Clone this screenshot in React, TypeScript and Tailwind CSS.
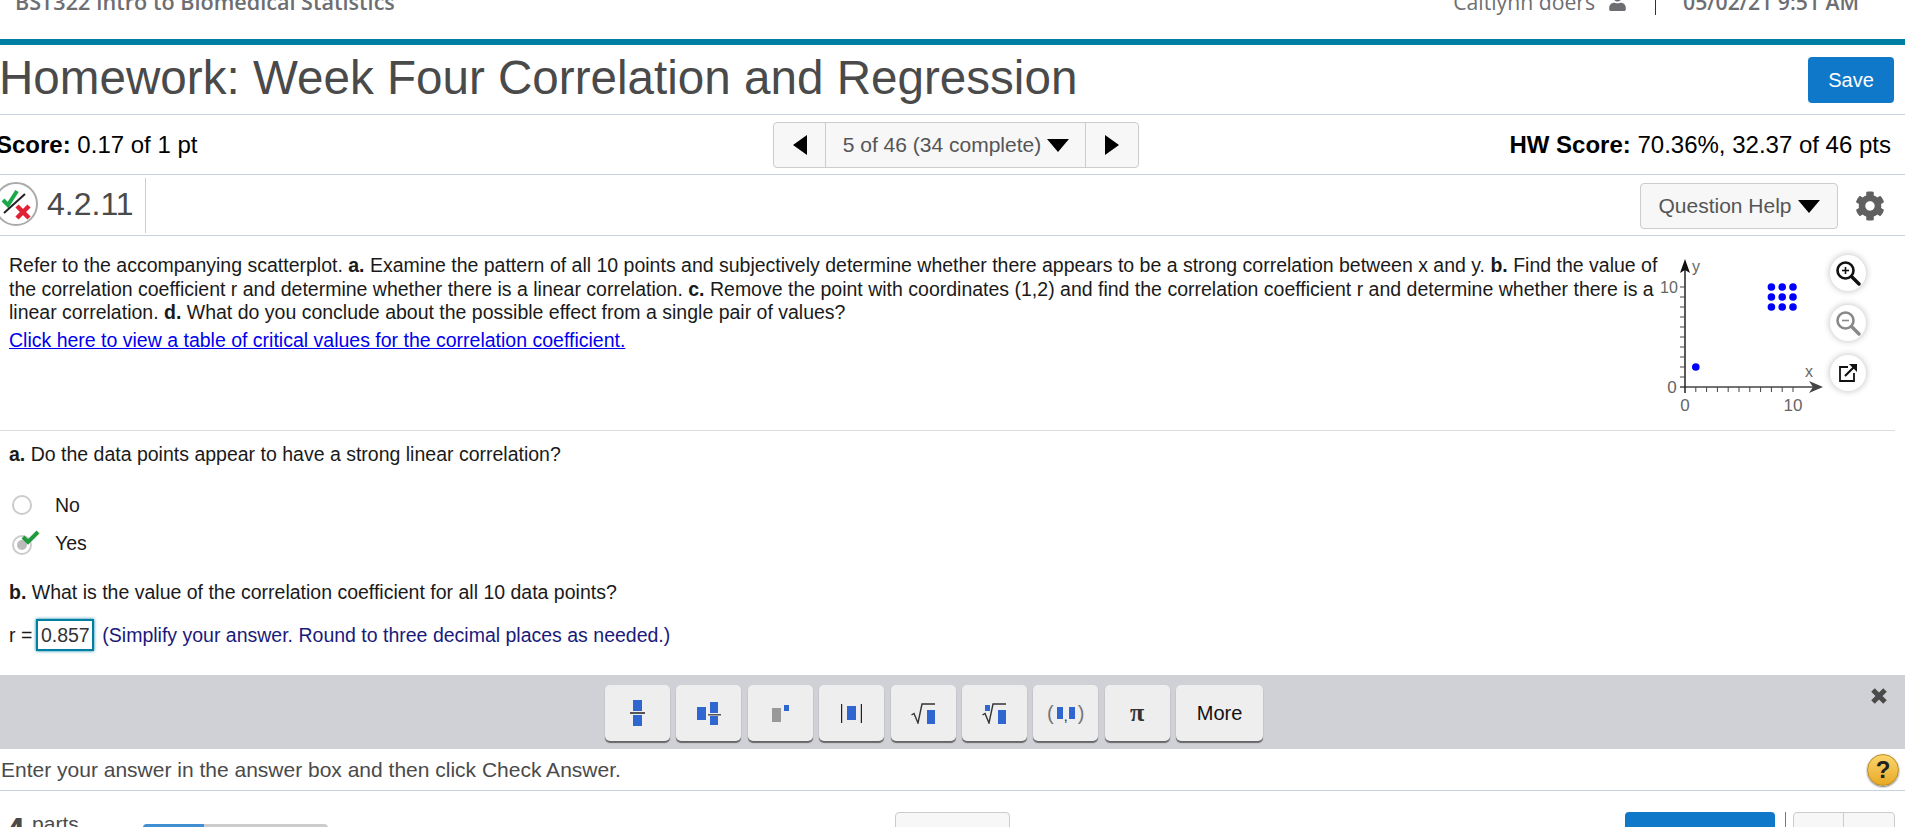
import React from "react";
import { FaCog, FaUser } from "react-icons/fa";

const Box = ({ x, y, w, h, fill = "#2f66d0" }: any) => <rect x={x} y={y} width={w} height={h} fill={fill} />;

function Frac() {
  return (
    <svg width="15" height="26" viewBox="0 0 15 26">
      <Box x={3} y={0} w={9} h={11} />
      <rect x="0" y="12" width="15" height="2" fill="#555" />
      <Box x={3} y={15} w={9} h={11} />
    </svg>
  );
}

function Mixed() {
  return (
    <svg width="24" height="23" viewBox="0 0 24 23">
      <Box x={0} y={5} w={9} h={13} />
      <Box x={13} y={0} w={8} h={11} />
      <rect x="11" y="12" width="13" height="1.5" fill="#555" />
      <Box x={13} y={14} w={8} h={9} />
    </svg>
  );
}

function Power() {
  return (
    <svg width="17" height="17" viewBox="0 0 17 17">
      <Box x={0} y={3} w={9} h={14} fill="#999999" />
      <Box x={12} y={0} w={5} h={6} />
    </svg>
  );
}

function Abs() {
  return (
    <svg width="21" height="19" viewBox="0 0 21 19">
      <rect x="0" y="0" width="1.2" height="19" fill="#222" />
      <Box x={6} y={2} w={9} h={14} />
      <rect x="19.8" y="0" width="1.2" height="19" fill="#222" />
    </svg>
  );
}

function Sqrt({ index }: { index?: boolean }) {
  return (
    <svg width="24" height="21" viewBox="0 0 24 21">
      {index && <Box x={3} y={2} w={5} h={6} />}
      <path d="M0.5 12 L3 10.5 L7 20 L11 1 L24 1" fill="none" stroke="#333" strokeWidth="1.4" />
      <Box x={16} y={7} w={8} h={14} />
    </svg>
  );
}

function Pair() {
  return (
    <div className="flex items-center text-[20px] leading-none text-[#777]">
      <span>(</span>
      <span className="w-[6px] h-[12px] bg-[#2f66d0] ml-[3px]" />
      <span className="w-[6px] text-center text-[14px] text-[#222] self-end">,</span>
      <span className="w-[6px] h-[12px] bg-[#2f66d0]" />
      <span className="ml-[3px]">)</span>
    </div>
  );
}

function ToolButton({ children, wide }: { children: React.ReactNode; wide?: boolean }) {
  return (
    <button className={`${wide ? "w-[87px]" : "w-[65px]"} h-[56px] flex items-center justify-center bg-[#eeeeee] rounded-[5px] shadow-[0_2px_1px_#666]`}>
      {children}
    </button>
  );
}

function Scatter() {
  const grid: number[][] = [];
  [8, 9, 10].forEach((a) => [8, 9, 10].forEach((b) => grid.push([a, b])));
  const px = (v: number) => 60 + v * 10.8;
  const py = (v: number) => 137 - v * 10;
  const ticks = [1, 2, 3, 4, 5, 6, 7, 8, 9, 10];
  return (
    <svg width="200" height="165" viewBox="0 0 200 165" className="shrink-0">
      <line x1="55" y1="137" x2="190" y2="137" stroke="#444" strokeWidth="1.5" />
      <polygon points="198,137 184,131 188,137 184,143" fill="#444" />
      <line x1="60" y1="143" x2="60" y2="20" stroke="#222" strokeWidth="1.5" />
      <polygon points="60,9 55,23 60,20 65,23" fill="#111" />
      {ticks.map((v) => (
        <line key={"x" + v} x1={px(v)} y1="137" x2={px(v)} y2="142" stroke="#444" strokeWidth="1" />
      ))}
      {ticks.map((v) => (
        <line key={"y" + v} x1="55" y1={py(v)} x2="60" y2={py(v)} stroke="#444" strokeWidth="1" />
      ))}
      {grid.map(([a, b]) => (
        <circle key={a + "-" + b} cx={px(a)} cy={py(b)} r="3.8" fill="#0000ff" />
      ))}
      <circle cx={px(1)} cy={py(2)} r="3.8" fill="#0000ff" />
      <g fontFamily="Liberation Sans, sans-serif" fontSize="16" fill="#666">
        <text x="67" y="22">y</text>
        <text x="180" y="127">x</text>
        <text x="35" y="43">10</text>
        <text x="47" y="143" textAnchor="middle" fontSize="17">0</text>
        <text x="60" y="161" textAnchor="middle" fontSize="17">0</text>
        <text x="168" y="161" textAnchor="middle" fontSize="17">10</text>
      </g>
    </svg>
  );
}

function Magnifier({ plus, color }: { plus?: boolean; color: string }) {
  return (
    <svg width="26" height="26" viewBox="0 0 26 26" fill="none" stroke={color}>
      <circle cx="10.5" cy="10.5" r="8" strokeWidth="2.6" />
      <line x1="16.5" y1="16.5" x2="24" y2="24" strokeWidth="3.4" strokeLinecap="round" />
      <line x1="7" y1="10.5" x2="14" y2="10.5" strokeWidth="1.6" />
      {plus && <line x1="10.5" y1="7" x2="10.5" y2="14" strokeWidth="1.6" />}
    </svg>
  );
}

function OpenNew() {
  return (
    <svg width="20" height="20" viewBox="0 0 20 20" fill="none" stroke="#111">
      <path d="M10 4 H2 V18 H16 V10" strokeWidth="1.8" />
      <path d="M7 13 L17 3" strokeWidth="2.2" />
      <polygon points="11,1 19,1 19,9" fill="#111" stroke="none" />
    </svg>
  );
}

function RoundButton({ children }: { children: React.ReactNode }) {
  return (
    <button className="w-[36px] h-[36px] rounded-full bg-white flex items-center justify-center shadow-[0_0_7px_#bbb]">
      {children}
    </button>
  );
}

export default function App() {
  return (
    <div className="h-[827px] w-[1905px] overflow-hidden bg-white font-['Liberation_Sans',Arial,sans-serif] text-black">
      {/* top bar, cut off by the screenshot */}
      <div className="h-[39px] flex justify-between text-[#6d6e71] font-['Open_Sans',sans-serif] text-[21.6px] leading-[20px] overflow-hidden">
        <div className="pl-[15px] -mt-[8px] font-semibold">BST322 Intro to Biomedical Statistics</div>
        <div className="flex items-start pr-[46px] -mt-[8px] text-[21.2px]">
          <span className="font-normal">Caitlynn doers</span>
          <FaUser className="ml-[13px] text-[19px]" />
          <span className="w-[1px] h-[23px] bg-[#333] ml-[28px] mr-[27px]" />
          <span className="font-semibold">05/02/21 9:51 AM</span>
        </div>
      </div>
      <div className="h-[6px] bg-[#007fa3]" />

      {/* title */}
      <div className="h-[70px] flex items-center justify-between border-b border-[#c9d1e0] pr-[11px]">
        <h1 className="text-[47.6px] leading-none text-[#4a4a4a] -ml-[1px] -mt-[4px]">Homework: Week Four Correlation and Regression</h1>
        <button className="w-[86px] h-[46px] rounded-[4px] bg-[#0f78c9] text-white text-[20px]">Save</button>
      </div>

      {/* score row */}
      <div className="h-[60px] grid grid-cols-3 items-center border-b border-[#c9d1e0] text-[24px] pr-[14px]">
        <div className="-ml-[4px]"><b>Score:</b> 0.17 of 1 pt</div>
        <div className="flex justify-center">
          <div className="ml-[22px] flex h-[46px] w-[366px] shrink-0 rounded-[4px] border border-[#ccc] bg-[#f7f7f7] text-[#555] text-[21px]">
            <div className="w-[51px] flex items-center justify-center text-black">
              <span className="border-y-[10px] border-y-transparent border-r-[14px] border-r-black" />
            </div>
            <div className="flex-1 flex items-center justify-center border-x border-[#ccc] whitespace-nowrap">
              5 of 46 (34 complete)
              <span className="ml-[6px] mt-[2px] border-x-[11px] border-x-transparent border-t-[13px] border-t-black" />
            </div>
            <div className="w-[52px] flex items-center justify-center">
              <span className="border-y-[10px] border-y-transparent border-l-[14px] border-l-black" />
            </div>
          </div>
        </div>
        <div className="text-right"><b>HW Score:</b> 70.36%, 32.37 of 46 pts</div>
      </div>

      {/* question number */}
      <div className="h-[61px] flex items-center justify-between border-b border-[#c9d1e0] pr-[20px]">
        <div className="flex items-center h-full">
          <svg width="44" height="44" viewBox="0 0 44 44" className="-ml-[6px] -mt-[2px] shrink-0">
            <circle cx="22" cy="22" r="21" fill="white" stroke="#aaaaaa" strokeWidth="2" />
            <path d="M9 18 L14 23 L23 9" fill="none" stroke="#1ba84a" strokeWidth="4" />
            <line x1="10" y1="31" x2="31" y2="12" stroke="#222" strokeWidth="2" />
            <path d="M23 24 L35 36 M35 24 L23 36" stroke="#e02035" strokeWidth="4.5" />
          </svg>
          <span className="ml-[9px] -mt-[2px] text-[32px] text-[#4a4a4a]">4.2.11</span>
          <span className="ml-[11px] w-[1px] h-[55px] bg-[#ccc]" />
        </div>
        <div className="flex items-center mt-[1px]">
          <button className="w-[198px] h-[46px] flex items-center justify-center rounded-[4px] border border-[#ccc] bg-[#f7f7f7] text-[21px] text-[#555]">
            Question Help
            <span className="ml-[6px] mt-[2px] border-x-[11px] border-x-transparent border-t-[13px] border-t-black" />
          </button>
          <FaCog className="ml-[17px] text-[30px] text-[#606060]" />
        </div>
      </div>

      {/* question text with the plot */}
      <div className="h-[195px] flex border-b border-[#ddd] mr-[10px]">
        <div className="w-[1640px] shrink-0 pl-[9px] pt-[18px] text-[19.5px] leading-[23.7px] text-[#1a1a1a]">
          <div className="w-[1660px]">
            Refer to the accompanying scatterplot. <b>a.</b> Examine the pattern of all 10 points and subjectively determine whether there appears to be a strong correlation between x and y. <b>b.</b> Find the value of<br />
            the correlation coefficient r and determine whether there is a linear correlation. <b>c.</b> Remove the point with coordinates (1,2) and find the correlation coefficient r and determine whether there is a<br />
            linear correlation. <b>d.</b> What do you conclude about the possible effect from a single pair of values?
          </div>
          <a className="block mt-[4px] text-[#0000ee] underline">Click here to view a table of critical values for the correlation coefficient.</a>
        </div>
        <div className="mt-[14px] -ml-[15px]"><Scatter /></div>
        <div className="ml-[5px] mt-[19px] flex flex-col gap-[14px]">
          <RoundButton><Magnifier plus color="#111" /></RoundButton>
          <RoundButton><Magnifier color="#888" /></RoundButton>
          <RoundButton><OpenNew /></RoundButton>
        </div>
      </div>

      {/* answers */}
      <div className="pl-[9px] text-[19.5px] leading-[22px] text-[#1a1a1a]">
        <div className="pt-[12px]"><b>a.</b> Do the data points appear to have a strong linear correlation?</div>
        <div className="mt-[29px] flex items-center h-[22px] pl-[3px]">
          <span className="w-[20px] h-[20px] rounded-full bg-white border-2 border-[#ccc]" />
          <span className="ml-[23px]">No</span>
        </div>
        <div className="mt-[16px] flex items-center h-[22px] pl-[3px]">
          <svg width="28" height="26" viewBox="0 0 28 26" className="shrink-0">
            <circle cx="10" cy="15" r="9" fill="white" stroke="#ccc" strokeWidth="2" />
            <circle cx="10" cy="15" r="5" fill="#bbb" />
            <path d="M11 7 L16 12 L26 2" fill="none" stroke="#1f9a3c" strokeWidth="4" />
          </svg>
          <span className="ml-[15px]">Yes</span>
        </div>
        <div className="mt-[27px]"><b>b.</b> What is the value of the correlation coefficient for all 10 data points?</div>
        <div className="mt-[16px] flex items-center h-[32px]">
          <span>r =</span>
          <span className="ml-[4px] w-[58px] h-[32px] flex items-center justify-center border-2 border-[#007fa3] shadow-[0_0_3px_#007fa3] text-[#333]">0.857</span>
          <span className="ml-[8px] text-[#1a1a7a]">(Simplify your answer. Round to three decimal places as needed.)</span>
        </div>
      </div>

      {/* math palette */}
      <div className="mt-[24px] h-[74px] flex justify-center items-start pt-[10px] bg-[#d0d1d6] relative">
        <div className="flex gap-[6.4px] mr-[37px]">
          <ToolButton><Frac /></ToolButton>
          <ToolButton><Mixed /></ToolButton>
          <ToolButton><Power /></ToolButton>
          <ToolButton><Abs /></ToolButton>
          <ToolButton><Sqrt /></ToolButton>
          <ToolButton><Sqrt index /></ToolButton>
          <ToolButton><Pair /></ToolButton>
          <ToolButton><span className="text-[26px] leading-none font-bold text-[#333] font-['Liberation_Serif',serif]">π</span></ToolButton>
          <ToolButton wide><span className="text-[20px] text-[#111]">More</span></ToolButton>
        </div>
        <svg width="18" height="18" viewBox="0 0 18 18" className="absolute right-[17px] top-[12px]">
          <path d="M3 3 L15 15 M15 3 L3 15" stroke="#4a4a4a" strokeWidth="5" />
        </svg>
      </div>

      {/* instructions */}
      <div className="h-[42px] flex items-center justify-between border-b border-[#c9d1e0] pr-[6px] text-[21px] text-[#4a4a4a]">
        <span className="pl-[1px]">Enter your answer in the answer box and then click Check Answer.</span>
        <span className="w-[32px] h-[32px] rounded-full bg-linear-to-b from-[#fbd56a] to-[#e8a91f] border border-[#b98a1e] flex items-center justify-center font-bold text-[24px] text-[#222] shadow-[0_1px_2px_#777]">?</span>
      </div>

      {/* bottom row, cut off */}
      <div className="flex items-start">
        <div className="flex items-start w-[143px] shrink-0">
          <span className="ml-[5px] mt-[23px] text-[36px] leading-none font-bold text-[#4a4a4a]">4</span>
          <span className="ml-[7px] mt-[22px] text-[21px] leading-none text-[#4a4a4a]">parts</span>
        </div>
        <div className="mt-[33px] w-[185px] h-[20px] rounded-[4px] bg-[#ccc] overflow-hidden">
          <div className="w-[61px] h-full bg-[#3f8fd2]" />
        </div>
        <div className="ml-[567px] mt-[21px] w-[115px] h-[40px] rounded-[4px] border border-[#ccc] bg-[#f7f7f7]" />
        <div className="ml-[615px] mt-[21px] w-[150px] h-[40px] rounded-[4px] bg-[#0f78c9]" />
        <div className="ml-[10px] mt-[21px] w-[1px] h-[40px] bg-[#777]" />
        <div className="ml-[7px] mt-[21px] w-[102px] h-[40px] flex rounded-[4px] border border-[#ccc] bg-[#f7f7f7]">
          <div className="w-1/2 border-r border-[#ccc]" />
        </div>
      </div>
    </div>
  );
}
